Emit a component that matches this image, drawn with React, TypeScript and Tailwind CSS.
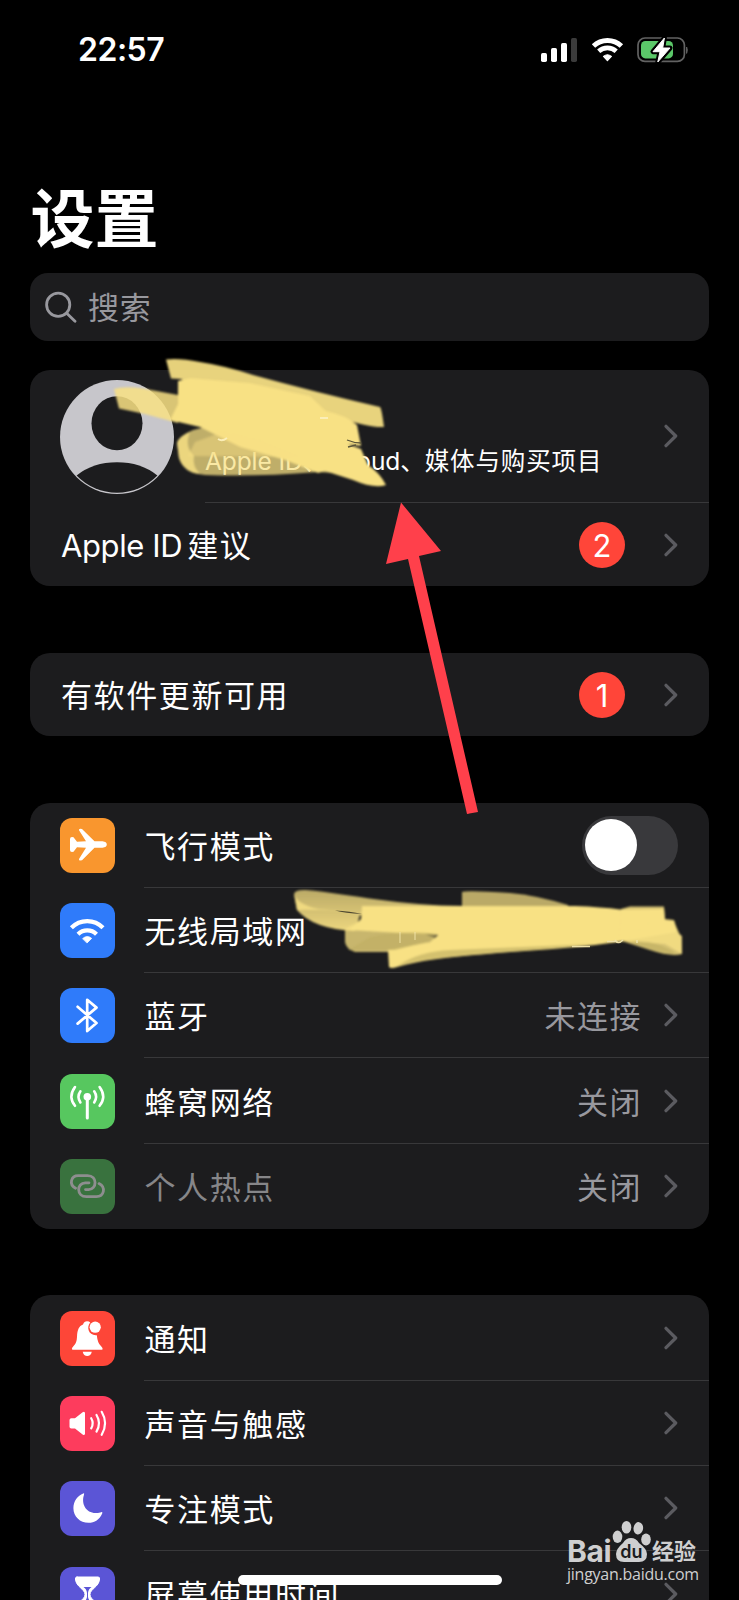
import React from 'react';

interface RowProps {
	label: string;
	color?: string;
	icon?: React.ReactNode;
	value?: string;
	dimmed?: boolean;
	last?: boolean;
	children?: React.ReactNode;
}

const Chevron = () => (
	<svg className="mr-[-1px] ml-6 h-6 w-3.5 shrink-0" viewBox="0 0 14 24" fill="none">
		<path d="M2 2.3 L11.7 12 L2 21.7" stroke="#5b5b60" strokeWidth="3.2" strokeLinecap="round" strokeLinejoin="round" />
	</svg>
);

const Badge = ({ count }: { count: number }) => (
	<span className="mr-[15px] flex h-[46px] w-[46px] items-center justify-center rounded-full bg-[#ff4539] pt-0.5 font-['Inter'] text-[31px] leading-none">
		{count}
	</span>
);

const Toggle = () => (
	<span className="mt-[1px] mr-[-1px] flex h-[59px] w-24 items-center rounded-full bg-[#39393c] px-[3px]">
		<span className="h-[52px] w-[52px] rounded-full bg-white" />
	</span>
);

const Row = ({ label, color = '', icon, value, dimmed, last, children }: RowProps) => (
	<div className="flex h-[85.3px] shrink-0 items-center pl-[30px]">
		<svg
			className={`h-[55px] w-[55px] shrink-0 rounded-[12px] ${color} ${dimmed ? 'opacity-50' : ''}`}
			viewBox="0 0 55 55"
			fill="none"
			stroke="white"
			strokeLinecap="round"
			strokeLinejoin="round"
		>
			{icon}
		</svg>
		<div className={`ml-[29px] flex h-full flex-1 items-center justify-between pr-8 ${last ? '' : 'border-b border-[#38383a]'}`}>
			<span className={`mt-[3px] ml-[0.5px] text-[31px] tracking-[1.6px] ${dimmed ? 'text-[#868689]' : ''}`}>{label}</span>
			<div className="flex items-center">
				{value && <span className="mt-[3px] mr-[-2px] text-[31px] tracking-[1.5px] text-[#98989e]">{value}</span>}
				{children ?? <Chevron />}
			</div>
		</div>
	</div>
);

const PlaneIcon = () => (
	<path
		d="M10 21 Q10 19 12 19 L13.5 19.3 L17 23.8 L26 23.2 L19 12.2 Q18.6 10.7 20.2 10.7 L22 11 L34.5 23.3 L42.5 23.3 Q46.8 23.8 46.8 26.5 Q46.8 29.2 42.5 29.7 L34.5 29.7 L22 42.3 L20.2 42.6 Q18.6 42.6 19 41 L26 29.8 L17 29.2 L13.5 33.7 L12 34 Q10 34 10 32 Z"
		fill="white"
		stroke="none"
	/>
);

const WifiIcon = () => (
	<>
		<path d="M11.4 24.8 A22 22 0 0 1 43 24.8" strokeWidth="4.2" strokeLinecap="butt" />
		<path d="M18 31.2 A13 13 0 0 1 36.5 31.2" strokeWidth="4.2" strokeLinecap="butt" />
		<path d="M22.8 35.4 Q27.2 31.6 31.7 35.4 L27.2 39.8 Z" fill="white" strokeWidth=".8" />
	</>
);

const BluetoothIcon = () => (
	<path d="M17.6 18.8 L36.5 35 L27.2 43 V11.8 L36.5 19.6 L17.6 35.6" strokeWidth="2.7" />
);

const AntennaIcon = () => (
	<>
		<circle cx="27.3" cy="22.8" r="3.8" fill="white" stroke="none" />
		<path d="M27.3 23 V44" strokeWidth="3" />
		<path d="M20.4 17.3 Q16.6 22.8 20.4 28.4 M34.2 17.3 Q38 22.8 34.2 28.4" strokeWidth="2.6" />
		<path d="M15 13 Q7.8 22.8 15 31.8 M39.6 13 Q46.8 22.8 39.6 31.8" strokeWidth="2.6" />
	</>
);

const HotspotIcon = () => (
	<>
		<path d="M15.6 29.2 C8.6 25.4 11 16.6 18.2 16.6 H27.5 C37.8 16.6 37 30.6 28.6 30.6 H25.5" strokeWidth="2.8" />
		<path d="M39 24.6 C46.2 28.4 44.2 37.7 36.3 37.7 H26.5 C16 37.7 16.6 23.8 25.3 23.8 H29" strokeWidth="2.8" />
	</>
);

const BellIcon = () => (
	<>
		<path d="M11.8 38 Q11.8 36.6 14 34.5 Q16.7 32 17 26 C17.3 18.5 19 15 23 13.5 Q24.2 10.3 27 10.3 Q29.2 10.3 30.2 11.6 C26 16.5 28.8 25 36.8 24.2 Q37.6 31.8 40.5 34.5 Q42.7 36.6 42.7 38 Q42.7 38.8 41.6 38.8 H13 Q11.8 38.8 11.8 38 Z" fill="white" stroke="none" />
		<circle cx="35.2" cy="16.2" r="5.6" fill="white" stroke="none" />
		<path d="M22.7 40.7 H31.8 Q30.8 45 27.2 45 Q23.7 45 22.7 40.7 Z" fill="white" stroke="none" />
	</>
);

const SpeakerIcon = () => (
	<>
		<path d="M9.5 24 Q9.5 22.3 11.3 22.3 H15 L22.6 16.2 Q25 15 25 17.3 V37.5 Q25 39.8 22.6 38.4 L15 32.4 H11.3 Q9.5 32.4 9.5 30.7 Z" fill="white" stroke="none" />
		<path d="M31.2 22.2 Q34.2 27.3 31.2 32.4" strokeWidth="2.2" />
		<path d="M36.5 19 Q41.5 27.3 36.5 35.6" strokeWidth="2.2" />
		<path d="M41.7 15.8 Q48.5 27.3 41.7 38.8" strokeWidth="2.2" />
	</>
);

const MoonIcon = () => (
	<path d="M23.2 12.4 Q24.6 12 24 13.8 C20.5 24 27.5 34.8 40.3 31.4 Q43 30.4 42.2 32.4 C39.8 38.3 34.5 41.8 28.5 41.8 C20 41.8 13.4 35.4 13.4 27.2 C13.4 20 17.6 14.5 23.2 12.4 Z" fill="white" stroke="none" />
);

const HourglassIcon = () => (
	<>
		<path d="M17 10 H38 Q39.8 10 39.6 12 C39 20 30 22 30 27.5 C30 33 39 35 39.6 43 Q39.8 45 38 45 H17 Q15.2 45 15.4 43 C16 35 25 33 25 27.5 C25 22 16 20 15.4 12 Q15.2 10 17 10 Z" fill="white" stroke="white" strokeWidth="1" />
		<path d="M23.5 20 H31.5 Q28.3 22 28 26 V30 Q28.6 34 34 38 H21 Q26.4 34 27 30 V26 Q26.7 22 23.5 20 Z" fill="#5b55d6" stroke="none" />
	</>
);

const StatusBar = () => (
	<div className="flex h-[99px] shrink-0 items-center justify-between pr-[51px] pl-[78px]">
		<span className="font-['Inter'] text-[32px] font-semibold tracking-[-0.5px]">22:57</span>
		<svg className="h-[30px] w-[148px]" viewBox="0 0 148 30" fill="none">
			<rect x="1" y="18" width="6" height="9" rx="1.7" fill="white" />
			<rect x="11" y="13" width="6" height="14" rx="1.7" fill="white" />
			<rect x="21" y="8" width="6" height="19" rx="1.7" fill="white" />
			<rect x="31" y="3" width="6" height="24" rx="1.7" fill="#3b3b3b" />
			<g transform="translate(51.7 2.8)" stroke="white">
				<path d="M1.8 8.2 A20.5 20.5 0 0 1 29.7 8.2" strokeWidth="5" />
				<path d="M7 13.5 A12.9 12.9 0 0 1 24.5 13.5" strokeWidth="4.6" />
				<path d="M11.8 18.6 Q15.7 15.3 19.7 18.6 L15.7 22.7 Z" fill="white" strokeWidth="1.2" strokeLinejoin="round" />
			</g>
			<rect x="98" y="3" width="46.4" height="23.4" rx="7" stroke="#626262" strokeWidth="1.7" />
			<path d="M146.6 12 Q148 15 146.6 18.4 Z" fill="#626262" stroke="#626262" />
			<rect x="101" y="6" width="32" height="17.4" rx="4.4" fill="#5bc869" />
			<path d="M124.4 3 L113 16.7 H120 L117.8 27 L130 13 H122.7 Z" fill="white" stroke="black" strokeWidth="5" strokeLinejoin="round" />
			<path d="M124.4 3 L113 16.7 H120 L117.8 27 L130 13 H122.7 Z" fill="white" stroke="white" strokeLinejoin="round" />
		</svg>
	</div>
);

const Avatar = () => (
	<svg className="h-[114px] w-[114px] shrink-0" viewBox="0 0 114 114">
		<circle cx="57" cy="57" r="57" fill="#c7c6cb" />
		<ellipse cx="57" cy="43.3" rx="25.5" ry="27" fill="#1c1c1e" />
		<path d="M16.6 95.5 Q33 82.3 57 82.3 Q81 82.3 97.4 95.5 A56 56 0 0 1 16.6 95.5 Z" fill="#1c1c1e" />
	</svg>
);

// Marker strokes and the arrow drawn by hand over the list
const Markup = () => (
	<svg className="pointer-events-none absolute inset-0 h-[1600px] w-[739px]" viewBox="0 0 739 1600">
		<defs>
			<filter id="soft">
				<feGaussianBlur stdDeviation="0.8" />
			</filter>
			<linearGradient id="fade" x1="0" y1="0" x2="0" y2="1">
				<stop offset="0" stopColor="#f8e184" stopOpacity=".72" />
				<stop offset="1" stopColor="#f8e184" stopOpacity=".95" />
			</linearGradient>
		</defs>
		<g fill="#f8e184" filter="url(#soft)">
			<path d="M166 359.5 Q180 358 200 362 Q226 366 253 375 Q315 392 380 407 Q381.5 408 384 427 Q370 428 340 418 L200 390 L181 379 L171 378.5 Z" opacity=".93" />
			<path d="M114 389 Q124 386 143 388.5 L178 395 L178 423 L145 414 L119 408.5 Z" opacity=".86" />
			<path d="M178 381 L190 378 L250 383 L310 396 L326 411 Q346 415 357 425 L361 446 L348 444 L361 449 L368 465 Q380 473 386 485 Q374 489 353 480 L325 471 L318 473 L285 460 L240 447 L200 427 L170 420 L178 404 Z" />
			<path d="M177 443 Q179 436 193 430 L205 427 L250 438 L345 458 L336 473 L318 472 Q255 477 205 475 Q184 473 179 458 Z" opacity=".74" />
			<path d="M177 443 Q179 436 190 432 Q184 446 194 456 Q192 466 200 474 Q184 473 179 458 Z" opacity=".8" />
			<path d="M195 442 L222 432 L260 441 L300 457 L188 456 Z" opacity=".45" />
			<path d="M294 894 Q295 889.5 306 890 C350 894 400 906 465 906 L380 921 L360 915 L355 931 Q313 929 297 910 Z" fill="url(#fade)" />
			<path d="M294 894 Q297 904 318 909 L347 911 Q305 909 297 910 Z" opacity=".8" />
			<path d="M462 892 Q466 890 510 893 Q535 895 568 905 L568 908 H462 Z" opacity=".72" />
			<path d="M345 929 L358 922 L410 928 L440 940 L390 952 L355 952 Q346 949 345 942 Z" opacity=".78" />
			<path d="M362 906 H575 Q602 907 620 909.5 L664 909 L665 920 L674 921 L677 932 L625 941 L595 945 C520 953 440 954 397 967 Q391 969 389 967 L388 950 L430 942 L438 935 L383 932 L349 930 L361 919 Z" />
			<path d="M621 909 L630 906.5 H664 L665 919 L674 920 L678 933 L682 936 L682 954 Q671 957 650 950 L619 940 Z" opacity=".85" />
			<path d="M650 922 H674 L681 937 L682 954 L665 944 L625 941 Z" opacity=".8" />
			<path d="M348 950 L370 937 Q400 930 438 934 L430 941 L395 950 Z M397 966 Q420 951 450 950 L595 944 C520 953 440 954 397 966 Z M630 942 Q657 939 677 954 Q660 955 630 942 Z" fill="#c0af62" opacity=".65" />
		</g>
		<path d="M335 910.5 Q350 911 362 914 Q345 913 335 910.5" fill="#4d4730" />
		<path d="M400 932 V943 M415 932 V940" stroke="#f4e7ac" strokeWidth="1.3" opacity=".7" />
		<path d="M572 946.5 H590 M607 941.5 H616 M615 940 Q618 945 623 940 M637 940 V943" stroke="#ede0a8" strokeWidth="1.6" fill="none" />
		<path d="M347 440 Q354 443 361 443 M348 447 L356 445" stroke="#5c5639" strokeWidth="1.3" fill="none" />
		<path d="M320 418 H328 M218 439 Q222 442 227 438" stroke="#fbeeb8" strokeWidth="1.8" fill="none" />
		<path d="M401 502.5 L441 551 L419 556 L478 812 L467 814 L408 559 L386 564 Z" fill="#ff404b" />
	</svg>
);

const Watermark = () => (
	<div className="absolute top-[1520px] left-[567px] w-[134px] text-[#cfcfd0]">
		<div className="flex h-[43px] items-end">
			<span className="w-[44px] font-['Inter'] text-[30px] leading-[24px] font-bold tracking-[-0.4px]">Bai</span>
			<svg className="h-[43px] w-[41px]" viewBox="0 0 41 43" fill="#cfcfd0">
				<ellipse cx="6.5" cy="16.8" rx="4.8" ry="6.2" />
				<ellipse cx="15.5" cy="7.3" rx="4.8" ry="6.3" />
				<ellipse cx="27.3" cy="8.3" rx="4.8" ry="6.2" transform="rotate(8 27.3 8.3)" />
				<ellipse cx="35" cy="19.5" rx="4.8" ry="6" />
				<path d="M20 18 Q25 18 28 23 Q36 29 36 34 Q36 42 28 42 H13 Q5 42 5 34 Q5 29 12 23 Q15 18 20 18 Z" />
				<text x="20.5" y="38" textAnchor="middle" fontFamily="Inter" fontSize="18" fontWeight="600" fill="#1c1c1e">du</text>
			</svg>
			<span className="text-[22px] leading-[24px] font-bold">经验</span>
		</div>
		<div className="mt-[1px] font-['Open_Sans'] text-[16px] leading-[20px] tracking-[-0.25px] whitespace-nowrap">jingyan.baidu.com</div>
	</div>
);

const App = () => {
	return (
		<div className="relative flex h-[1600px] w-[739px] flex-col overflow-hidden bg-black font-['Inter','Noto_Sans_CJK_SC',sans-serif] leading-none text-white">
			<StatusBar />
			<h1 className="mt-[87px] ml-[30.5px] text-[64px] leading-[65px] font-bold">设置</h1>
			<div className="mx-[30px] mt-[22px] flex h-[68px] shrink-0 items-center rounded-[18px] bg-[#1c1c1e] pl-[15px] text-[#98989e]">
				<svg className="h-8 w-8" viewBox="0 0 32 32" fill="none" stroke="#98989e" strokeWidth="2.8" strokeLinecap="round">
					<circle cx="13.2" cy="13.7" r="11.6" />
					<path d="M21.7 22.2 L30 30.3" />
				</svg>
				<span className="mt-[1px] ml-[11px] text-[31px] tracking-[0.8px]">搜索</span>
			</div>
			<div className="mx-[30px] mt-[29px] h-[216px] shrink-0 rounded-[20px] bg-[#1c1c1e]">
				<div className="flex h-[133px] items-center pl-[30px]">
					<Avatar />
					<div className="ml-[31px] flex h-full flex-1 items-center justify-between border-b border-[#38383a] pr-8">
						<span className="mt-[51px] text-[24.5px] tracking-[0.9px] whitespace-nowrap">
							<span className="tracking-[-0.1px]">Apple ID、iCloud、</span>媒体与购买项目
						</span>
						<Chevron />
					</div>
				</div>
				<div className="flex h-[83px] items-center pr-8 pl-[31px]">
					<span className="mt-[1px] flex-1 text-[31px]"><span className="tracking-[-0.4px]">Apple ID</span><span className="ml-[5px] tracking-[1.6px]">建议</span></span>
					<Badge count={2} />
					<Chevron />
				</div>
			</div>
			<div className="mx-[30px] mt-[67px] flex h-[83px] shrink-0 items-center rounded-[20px] bg-[#1c1c1e] pr-8 pl-[31px]">
				<span className="mt-[1px] flex-1 text-[31px] tracking-[1.6px]">有软件更新可用</span>
				<Badge count={1} />
				<Chevron />
			</div>
			<div className="mx-[30px] mt-[66.5px] shrink-0 rounded-[20px] bg-[#1c1c1e]">
				<Row label="飞行模式" color="bg-[#f9962e]" icon={<PlaneIcon />}>
					<Toggle />
				</Row>
				<Row label="无线局域网" color="bg-[#2f7bfa]" icon={<WifiIcon />}>
					<span />
				</Row>
				<Row label="蓝牙" color="bg-[#2f7bfa]" icon={<BluetoothIcon />} value="未连接" />
				<Row label="蜂窝网络" color="bg-[#57c75f]" icon={<AntennaIcon />} value="关闭" />
				<Row label="个人热点" color="bg-[#57c75f]" icon={<HotspotIcon />} value="关闭" dimmed last />
			</div>
			<div className="mx-[30px] mt-[66.5px] shrink-0 rounded-t-[20px] bg-[#1c1c1e]">
				<Row label="通知" color="bg-[#fd4638]" icon={<BellIcon />} />
				<Row label="声音与触感" color="bg-[#fd3c5d]" icon={<SpeakerIcon />} />
				<Row label="专注模式" color="bg-[#5b55d6]" icon={<MoonIcon />} />
				<Row label="屏幕使用时间" color="bg-[#5b55d6]" icon={<HourglassIcon />} />
			</div>
			<Markup />
			<div className="absolute top-[1575px] left-[238px] h-[10px] w-[264px] rounded-full bg-white" />
			<Watermark />
		</div>
	);
};

export default App;
